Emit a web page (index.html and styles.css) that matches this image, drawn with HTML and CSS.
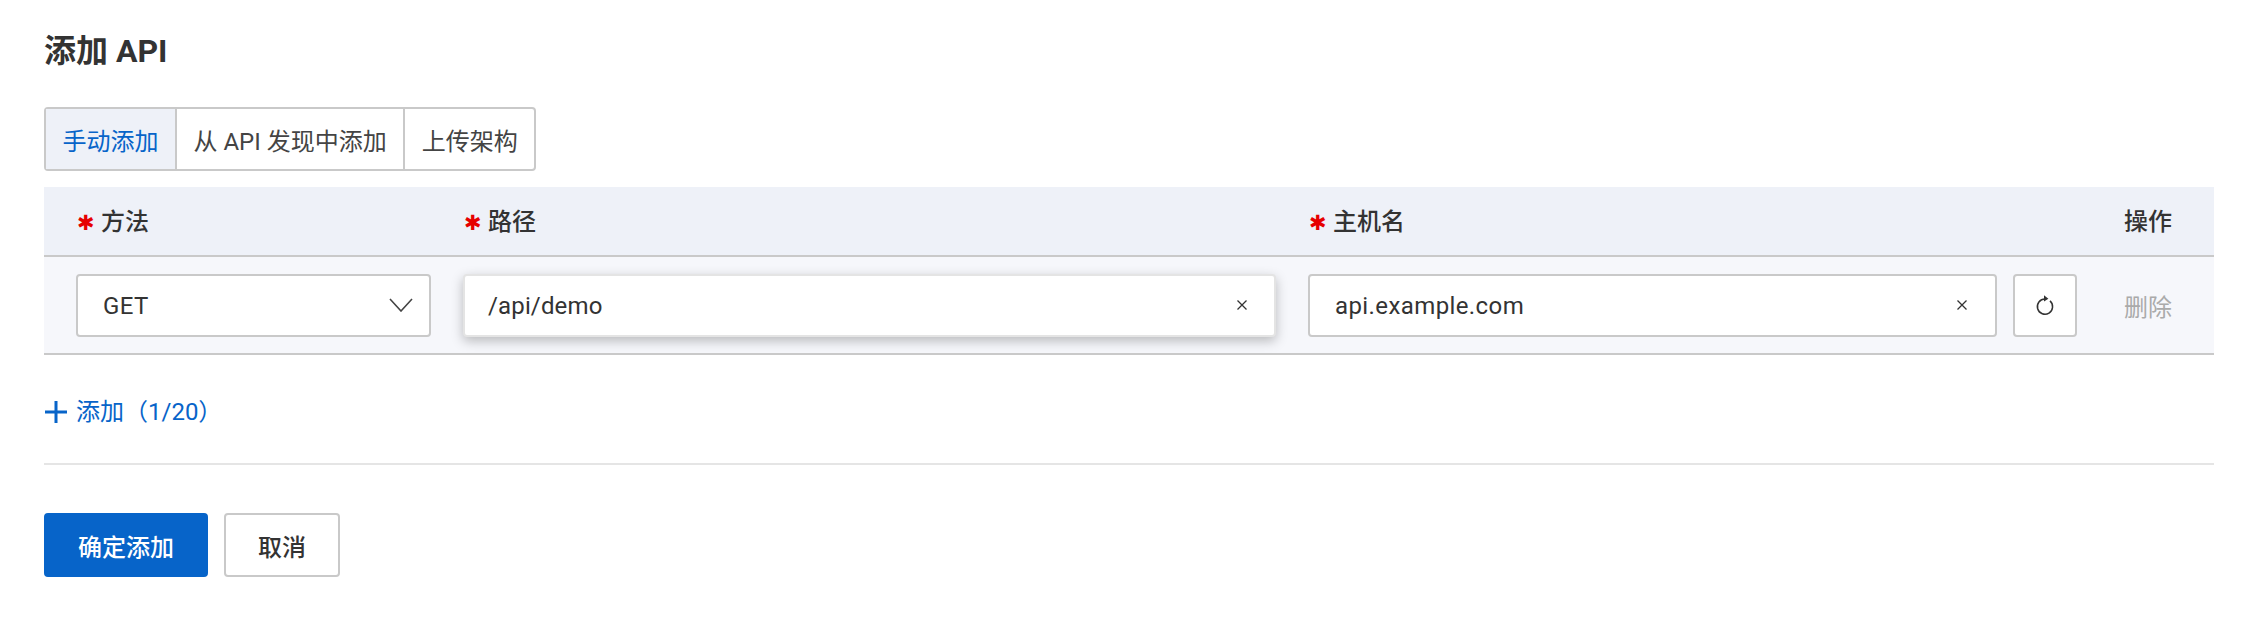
FILE: index.html
```html
<!DOCTYPE html>
<html lang="zh-CN">
<head>
  <meta charset="UTF-8" />
  <meta name="viewport" content="width=device-width, initial-scale=1.0" />
  <title>添加 API</title>
  <link rel="stylesheet" href="styles.css">
</head>
<body>
  <div class="page">
    <h1 class="page-title">添加 API</h1>

    <div class="tabs">
      <div class="tab tab-active">手动添加</div>
      <div class="tab">从 API 发现中添加</div>
      <div class="tab">上传架构</div>
    </div>

    <div class="table">
      <div class="table-head">
        <div class="col"><span class="star">✱</span>方法</div>
        <div class="col"><span class="star">✱</span>路径</div>
        <div class="col"><span class="star">✱</span>主机名</div>
        <div class="col">操作</div>
      </div>
      <div class="table-row">
        <div class="col">
          <div class="field">
            <span class="field-text">GET</span>
            <svg class="chevron" width="24" height="14" viewBox="0 0 24 14"><path d="M1 1l11 12L23 1" fill="none" stroke="#444" stroke-width="1.6"/></svg>
          </div>
        </div>
        <div class="col">
          <div class="field field-focus">
            <span class="field-text">/api/demo</span>
            <svg class="clear" width="12" height="12" viewBox="0 0 12 12"><path d="M1.5 1.5l9 9M10.5 1.5l-9 9" fill="none" stroke="#333" stroke-width="1.3"/></svg>
          </div>
        </div>
        <div class="col col-host">
          <div class="field">
            <span class="field-text">api.example.com</span>
            <svg class="clear" width="12" height="12" viewBox="0 0 12 12"><path d="M1.5 1.5l9 9M10.5 1.5l-9 9" fill="none" stroke="#333" stroke-width="1.3"/></svg>
          </div>
          <div class="icon-btn">
            <svg width="20" height="22" viewBox="0 0 20 22"><path d="M10 5a7.6 7.6 0 1 0 5 1.9" fill="none" stroke="#333" stroke-width="1.5"/><path d="M9 1.2l4.4 3.6L9 7.6z" fill="#333"/></svg>
          </div>
        </div>
        <div class="col op-disabled">删除</div>
      </div>
    </div>

    <div class="add-link">
      <svg width="22" height="22" viewBox="0 0 22 22"><path d="M11 0v22M0 11h22" stroke="#0764c9" stroke-width="3"/></svg>
      <span>添加（1/20）</span>
    </div>

    <div class="divider"></div>

    <div class="actions">
      <button class="btn btn-primary">确定添加</button>
      <button class="btn btn-cancel">取消</button>
    </div>
  </div>
</body>
</html>
```

FILE: styles.css
```css
* {
  margin: 0;
  padding: 0;
  box-sizing: border-box;
}
body {
  font-family: Roboto, "Noto Sans CJK SC", sans-serif;
  font-size: 24px;
  color: #333;
  background: #fff;
}
.page {
  padding: 30px 28px 0 44px;
}
.page-title {
  font-size: 32px;
  font-weight: 700;
  line-height: 42px;
  margin-bottom: 35px;
}
.tabs {
  display: inline-flex;
  height: 64px;
  border: 2px solid #c9c9c9;
  border-radius: 4px;
  vertical-align: top;
}
.tab {
  display: flex;
  align-items: center;
  padding: 0 16.5px;
  border-left: 2px solid #c9c9c9;
  color: #444;
}
.tab:first-child {
  border-left: 0;
}
.tab-active {
  background: #eef1f8;
  color: #0764c9;
}
.table {
  margin-top: 16px;
}
.table-head,
.table-row {
  display: grid;
  grid-template-columns: 387px 845px 816px 1fr;
  padding-left: 32px;
  border-bottom: 2px solid #c9c9c9;
  align-items: center;
}
.table-head {
  height: 70px;
  padding-bottom: 3px;
  background: #eef1f8;
  font-weight: 500;
}
.table-row {
  height: 98px;
  background: #f6f7fb;
}
.col {
  padding-right: 32px;
}
.col:last-child {
  padding-right: 0;
}
.col-host {
  display: flex;
  gap: 16px;
  padding-right: 47px;
}
.op-disabled {
  color: #aaa;
}
.star {
  display: inline-block;
  width: 16px;
  margin: 0 8px 0 1px;
  color: #e60000;
  font-family: "DejaVu Sans", sans-serif;
  font-size: 21px;
  line-height: 1;
  text-align: center;
}
.field {
  flex: 1;
  height: 63px;
  display: flex;
  align-items: center;
  justify-content: space-between;
  padding: 0 27px 0 25px;
  background: #fff;
  border: 2px solid #c9c9c9;
  border-radius: 4px;
}
.field-text {
  letter-spacing: 0.4px;
  padding-top: 2px;
}
.field-focus {
  padding-left: 23px;
  padding-right: 26px;
  border-color: #e4e4e4;
  box-shadow: 0 4px 12px rgba(0, 0, 0, 0.25);
}
.field-focus .field-text {
  letter-spacing: 0.15px;
}
.chevron {
  margin-right: -11px;
}
.icon-btn {
  width: 64px;
  height: 63px;
  display: flex;
  align-items: center;
  justify-content: center;
  background: #fff;
  border: 2px solid #c9c9c9;
  border-radius: 4px;
}
.add-link {
  display: flex;
  align-items: center;
  gap: 9px;
  margin-top: 46px;
  padding-left: 1px;
  color: #0764c9;
  line-height: 22px;
}
.divider {
  height: 2px;
  background: #e5e5e5;
  margin-top: 40px;
}
.actions {
  display: flex;
  gap: 16px;
  margin-top: 48px;
}
.btn {
  width: 164px;
  height: 64px;
  font-family: inherit;
  font-size: 24px;
  font-weight: 500;
  color: #333;
  background: #fff;
  border: 2px solid #c9c9c9;
  border-radius: 4px;
}
.btn-cancel {
  width: 116px;
}
.btn-primary {
  color: #fff;
  background: #0764c9;
  border-color: #0764c9;
}
```
